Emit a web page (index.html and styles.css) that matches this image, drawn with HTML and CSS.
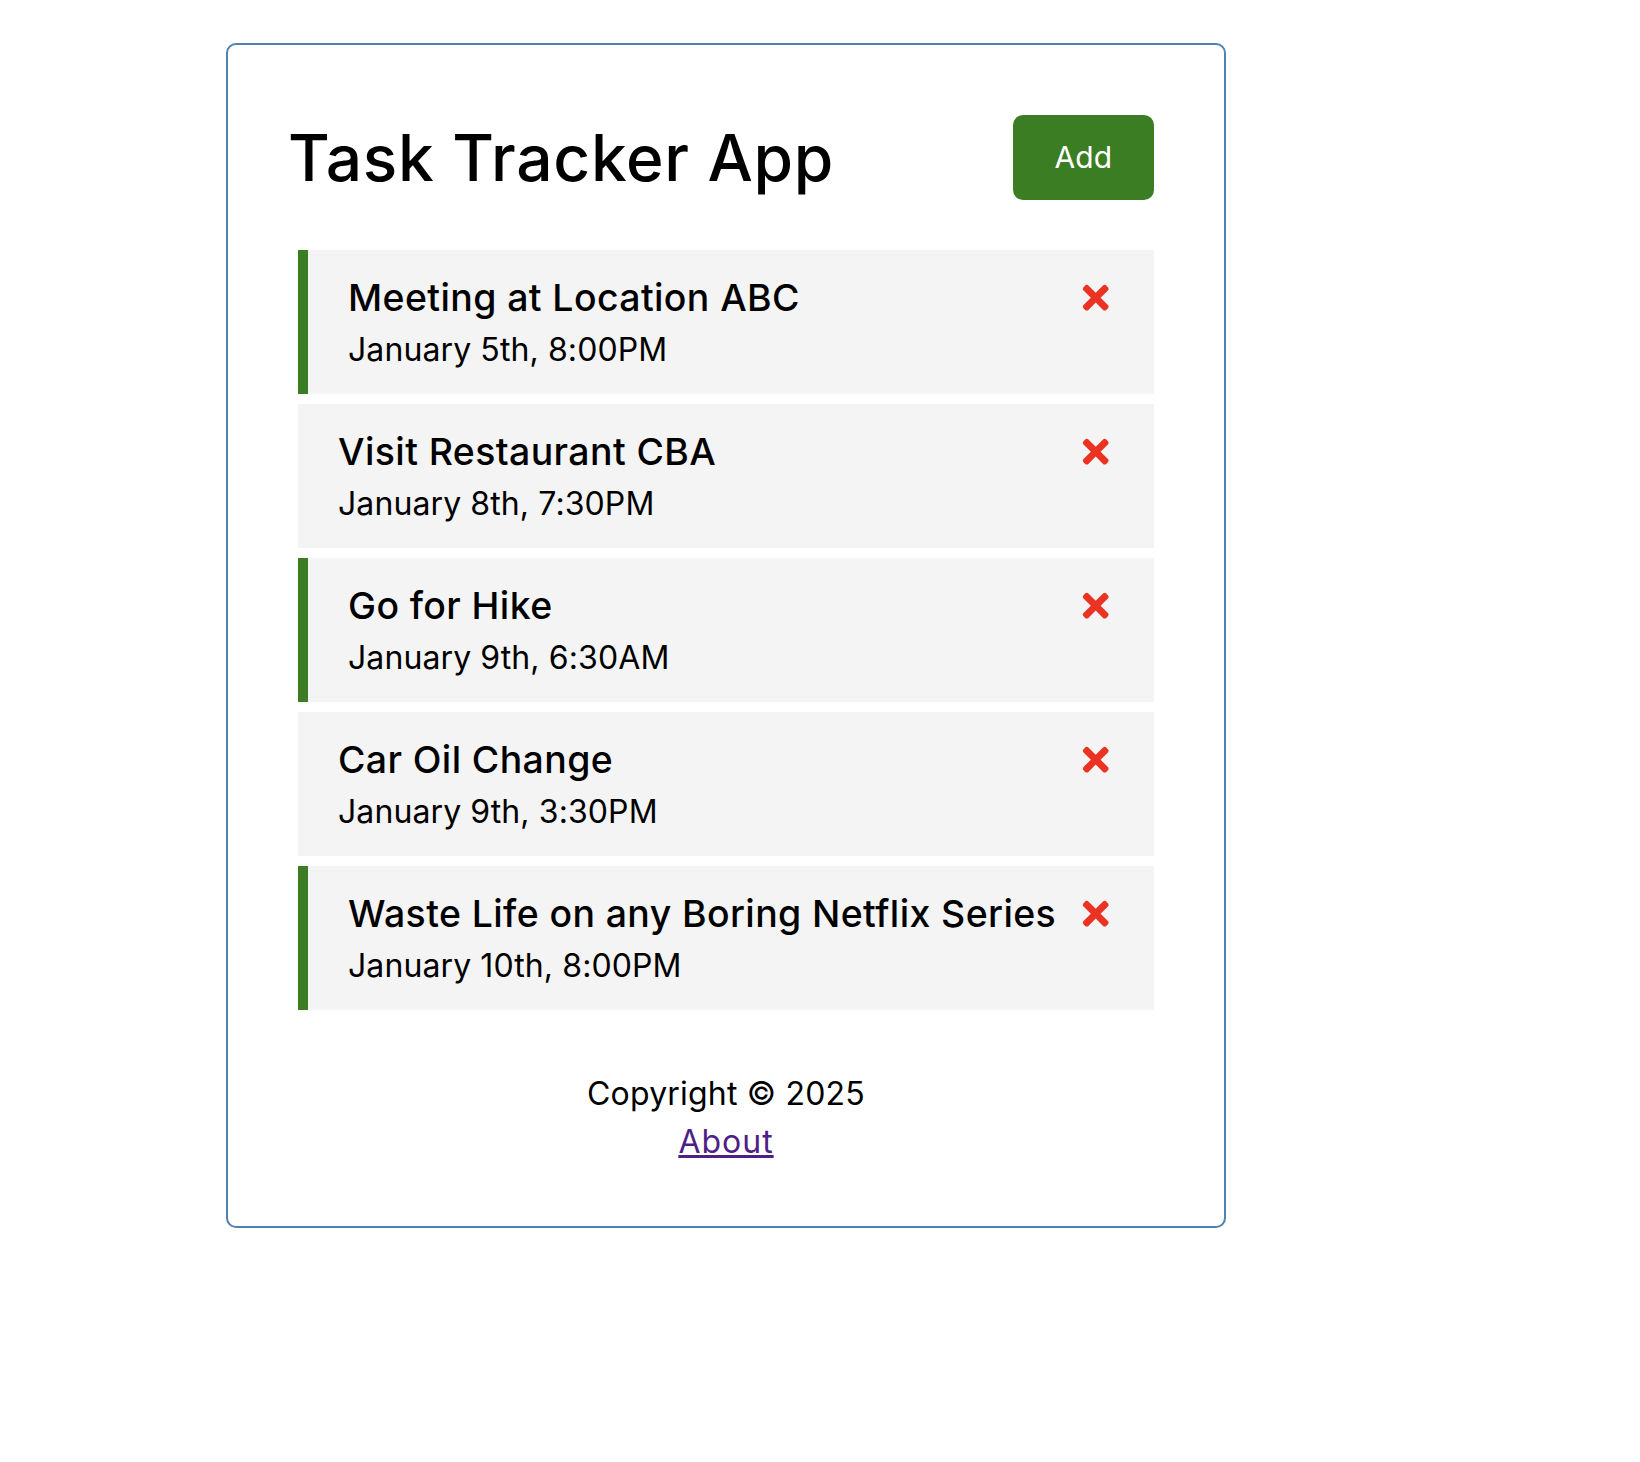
FILE: index.html
```html
<!DOCTYPE html>
<html lang="en">
<head>
<meta charset="utf-8">
<title>Task Tracker</title>
<link rel="stylesheet" href="styles.css">
</head>
<body>
<div class="container">
  <header class="header">
    <h1>Task Tracker App</h1>
    <button class="btn">Add</button>
  </header>

  <div class="task reminder">
    <h3>Meeting at Location ABC <svg class="del" viewBox="0 0 352 512" width="1em" height="1em"><path d="M242.72 256l100.07-100.07c12.28-12.28 12.28-32.19 0-44.48l-22.24-22.24c-12.28-12.28-32.19-12.28-44.48 0L176 189.28 75.93 89.21c-12.28-12.28-32.19-12.28-44.48 0L9.21 111.45c-12.28 12.28-12.28 32.19 0 44.48L109.28 256 9.21 356.07c-12.28 12.28-12.28 32.19 0 44.48l22.24 22.24c12.28 12.28 32.2 12.28 44.48 0L176 322.72l100.07 100.07c12.28 12.28 32.2 12.28 44.48 0l22.24-22.24c12.28-12.28 12.28-32.19 0-44.48L242.72 256z"/></svg></h3>
    <p>January 5th, 8:00PM</p>
  </div>

  <div class="task">
    <h3>Visit Restaurant CBA <svg class="del" viewBox="0 0 352 512" width="1em" height="1em"><path d="M242.72 256l100.07-100.07c12.28-12.28 12.28-32.19 0-44.48l-22.24-22.24c-12.28-12.28-32.19-12.28-44.48 0L176 189.28 75.93 89.21c-12.28-12.28-32.19-12.28-44.48 0L9.21 111.45c-12.28 12.28-12.28 32.19 0 44.48L109.28 256 9.21 356.07c-12.28 12.28-12.28 32.19 0 44.48l22.24 22.24c12.28 12.28 32.2 12.28 44.48 0L176 322.72l100.07 100.07c12.28 12.28 32.2 12.28 44.48 0l22.24-22.24c12.28-12.28 12.28-32.19 0-44.48L242.72 256z"/></svg></h3>
    <p>January 8th, 7:30PM</p>
  </div>

  <div class="task reminder">
    <h3>Go for Hike <svg class="del" viewBox="0 0 352 512" width="1em" height="1em"><path d="M242.72 256l100.07-100.07c12.28-12.28 12.28-32.19 0-44.48l-22.24-22.24c-12.28-12.28-32.19-12.28-44.48 0L176 189.28 75.93 89.21c-12.28-12.28-32.19-12.28-44.48 0L9.21 111.45c-12.28 12.28-12.28 32.19 0 44.48L109.28 256 9.21 356.07c-12.28 12.28-12.28 32.19 0 44.48l22.24 22.24c12.28 12.28 32.2 12.28 44.48 0L176 322.72l100.07 100.07c12.28 12.28 32.2 12.28 44.48 0l22.24-22.24c12.28-12.28 12.28-32.19 0-44.48L242.72 256z"/></svg></h3>
    <p>January 9th, 6:30AM</p>
  </div>

  <div class="task">
    <h3>Car Oil Change <svg class="del" viewBox="0 0 352 512" width="1em" height="1em"><path d="M242.72 256l100.07-100.07c12.28-12.28 12.28-32.19 0-44.48l-22.24-22.24c-12.28-12.28-32.19-12.28-44.48 0L176 189.28 75.93 89.21c-12.28-12.28-32.19-12.28-44.48 0L9.21 111.45c-12.28 12.28-12.28 32.19 0 44.48L109.28 256 9.21 356.07c-12.28 12.28-12.28 32.19 0 44.48l22.24 22.24c12.28 12.28 32.2 12.28 44.48 0L176 322.72l100.07 100.07c12.28 12.28 32.2 12.28 44.48 0l22.24-22.24c12.28-12.28 12.28-32.19 0-44.48L242.72 256z"/></svg></h3>
    <p>January 9th, 3:30PM</p>
  </div>

  <div class="task reminder">
    <h3>Waste Life on any Boring Netflix Series <svg class="del" viewBox="0 0 352 512" width="1em" height="1em"><path d="M242.72 256l100.07-100.07c12.28-12.28 12.28-32.19 0-44.48l-22.24-22.24c-12.28-12.28-32.19-12.28-44.48 0L176 189.28 75.93 89.21c-12.28-12.28-32.19-12.28-44.48 0L9.21 111.45c-12.28 12.28-12.28 32.19 0 44.48L109.28 256 9.21 356.07c-12.28 12.28-12.28 32.19 0 44.48l22.24 22.24c12.28 12.28 32.2 12.28 44.48 0L176 322.72l100.07 100.07c12.28 12.28 32.2 12.28 44.48 0l22.24-22.24c12.28-12.28 12.28-32.19 0-44.48L242.72 256z"/></svg></h3>
    <p>January 10th, 8:00PM</p>
  </div>

  <footer class="footer">
    <p class="copy">Copyright &copy; 2025</p>
    <a class="about" href="#about">About</a>
  </footer>
</div>
</body>
</html>
```

FILE: styles.css
```css
* {
  box-sizing: border-box;
  margin: 0;
  padding: 0;
}

body {
  font-family: Inter, "Liberation Sans", sans-serif;
  color: #000;
  background: #fff;
}

.container {
  width: 1000px;
  margin: 43px 0 0 226px;
  border: 2px solid #5181b2;
  border-radius: 10px;
  padding: 60px;
}

.header {
  display: flex;
  justify-content: space-between;
  align-items: center;
  margin-bottom: 40px;
}

.header h1 {
  font-size: 64px;
  font-weight: 500;
  line-height: 96px;
  letter-spacing: 0.7px;
}

.btn {
  display: inline-block;
  background: #3a7d23;
  color: #fff;
  border: none;
  padding: 20px 42px;
  margin: 10px;
  border-radius: 10px;
  font-family: inherit;
  font-size: 30px;
  line-height: 45px;
  cursor: pointer;
}

.task {
  background: #f4f4f4;
  margin: 10px;
  padding: 20px 40px;
}

.task.reminder {
  border-left: 10px solid #3a7d23;
}

.task h3 {
  display: flex;
  align-items: center;
  justify-content: space-between;
  font-size: 37.44px;
  font-weight: 500;
  line-height: 56px;
  letter-spacing: 0.4px;
}

.task p {
  font-size: 32px;
  line-height: 48px;
  letter-spacing: 0.1px;
}

.del {
  fill: #ea3323;
  flex: none;
}

.footer {
  margin-top: 60px;
  text-align: center;
  font-size: 32px;
  line-height: 48px;
}

.copy {
  letter-spacing: 0.2px;
}

.about {
  color: #4d1f87;
  letter-spacing: 1px;
}
```
